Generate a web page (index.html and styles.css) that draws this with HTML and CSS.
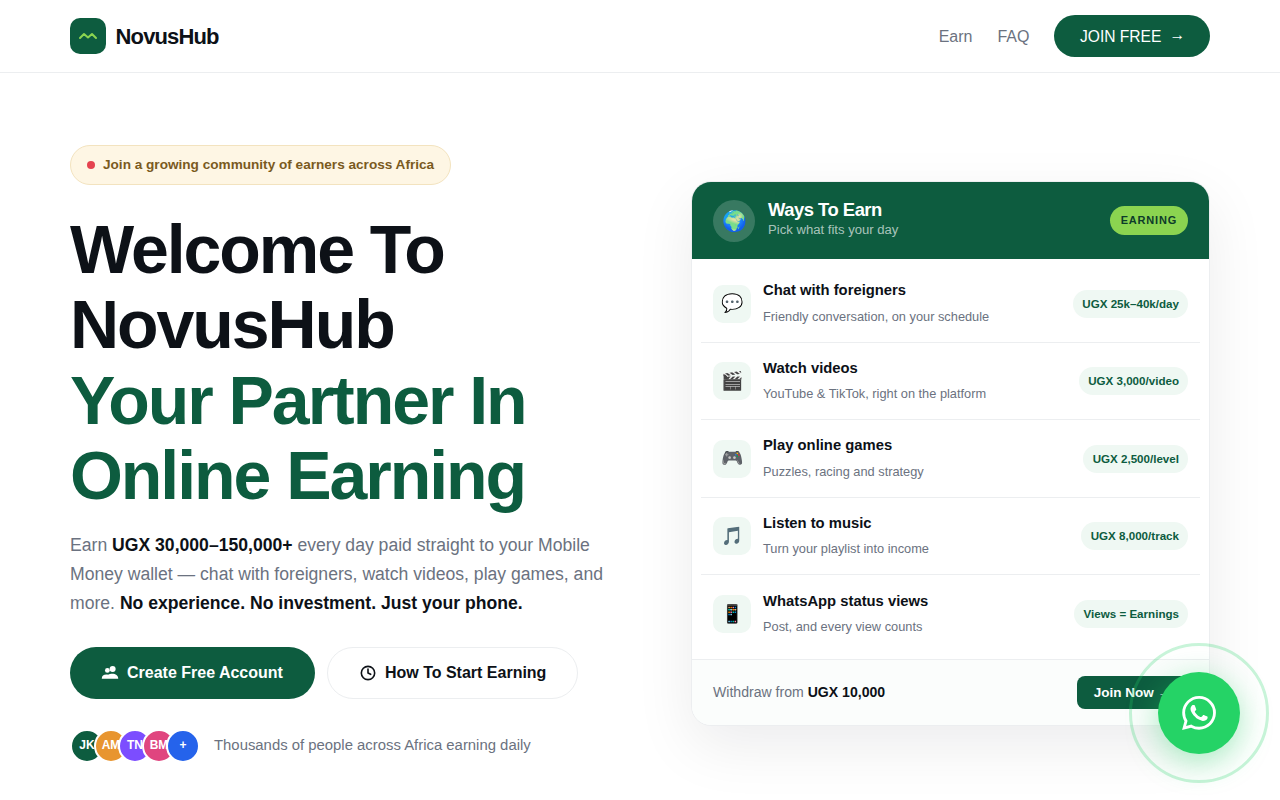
FILE: index.html
```html
<!DOCTYPE html>
<html lang="en">
<head>
    <meta charset="UTF-8">
    <title>NovusHub</title>
    <link rel="stylesheet" href="styles.css">
</head>
<body>
    <nav class="nav">
        <a class="brand" href="#">
            <span class="brand-mark">
                <svg width="20" height="20" viewBox="0 0 20 20" fill="none"><path d="M2 12 L6 8 L10 11.5 L14 8 L18 12" stroke="#8bd450" stroke-width="2" stroke-linecap="round" stroke-linejoin="round"/></svg>
            </span>
            <span class="brand-name">NovusHub</span>
        </a>
        <div class="nav-links">
            <a class="nav-link" href="#">Earn</a>
            <a class="nav-link" href="#">FAQ</a>
            <a class="nav-cta" href="#">JOIN FREE <span class="nav-arrow">→</span></a>
        </div>
    </nav>

    <main class="hero">
        <section class="hero-left">
            <div class="badge"><span class="badge-dot"></span>Join a growing community of earners across Africa</div>
            <h1>Welcome To NovusHub <span class="accent">Your Partner In Online Earning</span></h1>
            <p class="lead">Earn <strong>UGX 30,000–150,000+</strong> every day paid straight to your Mobile Money wallet — chat with foreigners, watch videos, play games, and more. <strong>No experience. No investment. Just your phone.</strong></p>
            <div class="actions">
                <a class="btn btn-primary" href="#">
                    <svg width="18" height="18" viewBox="0 0 24 24" fill="currentColor"><circle cx="8.5" cy="8.5" r="3.2"/><circle cx="15.5" cy="6.8" r="4"/><path d="M1 19.5c0-3.5 2.5-5.5 6-5.5 1 0 1.8.1 2.5.4 1.5-1 3.5-1.4 5.5-1.4 4.5 0 8 2.2 8 6.5z"/></svg>
                    Create Free Account
                </a>
                <a class="btn btn-ghost" href="#">
                    <svg width="16" height="16" viewBox="0 0 24 24" fill="none" stroke="currentColor" stroke-width="2.4" stroke-linecap="round" stroke-linejoin="round"><circle cx="12" cy="12" r="10"/><path d="M12 6v6l4 2"/></svg>
                    How To Start Earning
                </a>
            </div>
            <div class="people">
                <div class="avatars">
                    <span class="avatar av-green">JK</span>
                    <span class="avatar av-orange">AM</span>
                    <span class="avatar av-purple">TN</span>
                    <span class="avatar av-pink">BM</span>
                    <span class="avatar av-blue">+</span>
                </div>
                <span class="people-text">Thousands of people across Africa earning daily</span>
            </div>
        </section>

        <aside class="card">
            <header class="card-head">
                <span class="globe">🌍</span>
                <div class="card-head-text">
                    <div class="card-title">Ways To Earn</div>
                    <div class="card-sub">Pick what fits your day</div>
                </div>
                <span class="live">EARNING</span>
            </header>
            <ul class="ways">
                <li class="way">
                    <span class="way-icon">💬</span>
                    <div class="way-text"><div class="way-name">Chat with foreigners</div><div class="way-desc">Friendly conversation, on your schedule</div></div>
                    <span class="rate">UGX 25k–40k/day</span>
                </li>
                <li class="way">
                    <span class="way-icon">🎬</span>
                    <div class="way-text"><div class="way-name">Watch videos</div><div class="way-desc">YouTube &amp; TikTok, right on the platform</div></div>
                    <span class="rate">UGX 3,000/video</span>
                </li>
                <li class="way">
                    <span class="way-icon">🎮</span>
                    <div class="way-text"><div class="way-name">Play online games</div><div class="way-desc">Puzzles, racing and strategy</div></div>
                    <span class="rate">UGX 2,500/level</span>
                </li>
                <li class="way">
                    <span class="way-icon">🎵</span>
                    <div class="way-text"><div class="way-name">Listen to music</div><div class="way-desc">Turn your playlist into income</div></div>
                    <span class="rate">UGX 8,000/track</span>
                </li>
                <li class="way">
                    <span class="way-icon">📱</span>
                    <div class="way-text"><div class="way-name">WhatsApp status views</div><div class="way-desc">Post, and every view counts</div></div>
                    <span class="rate">Views = Earnings</span>
                </li>
            </ul>
            <footer class="card-foot">
                <span>Withdraw from <strong>UGX 10,000</strong></span>
                <a class="join" href="#">Join Now →</a>
            </footer>
        </aside>
    </main>

    <a class="wa" href="#">
        <span class="wa-ring"></span>
        <svg width="34" height="34" viewBox="0 0 24 24" fill="#fff"><path d="M17.472 14.382c-.297-.149-1.758-.867-2.03-.967-.273-.099-.471-.148-.67.15-.197.297-.767.966-.94 1.164-.173.199-.347.223-.644.075-.297-.15-1.255-.463-2.39-1.475-.883-.788-1.48-1.761-1.653-2.059-.173-.297-.018-.458.13-.606.134-.133.298-.347.446-.52.149-.174.198-.298.298-.497.099-.198.05-.371-.025-.52-.075-.149-.669-1.612-.916-2.207-.242-.579-.487-.5-.669-.51-.173-.008-.371-.01-.57-.01-.198 0-.52.074-.792.372-.272.297-1.04 1.016-1.04 2.479 0 1.462 1.065 2.875 1.213 3.074.149.198 2.096 3.2 5.077 4.487.709.306 1.262.489 1.694.625.712.227 1.36.195 1.871.118.571-.085 1.758-.719 2.006-1.413.248-.694.248-1.289.173-1.413-.074-.124-.272-.198-.57-.347m-5.421 7.403h-.004a9.87 9.87 0 01-5.031-1.378l-.361-.214-3.741.982.998-3.648-.235-.374a9.86 9.86 0 01-1.51-5.26c.001-5.45 4.436-9.884 9.888-9.884 2.64 0 5.122 1.03 6.988 2.898a9.825 9.825 0 012.893 6.994c-.003 5.45-4.437 9.884-9.885 9.884m8.413-18.297A11.815 11.815 0 0012.05 0C5.495 0 .16 5.335.157 11.892c0 2.096.547 4.142 1.588 5.945L.057 24l6.305-1.654a11.882 11.882 0 005.683 1.448h.005c6.554 0 11.89-5.335 11.893-11.893a11.821 11.821 0 00-3.48-8.413z"/></svg>
    </a>
</body>
</html>
```

FILE: styles.css
```css
* {
    box-sizing: border-box;
}

body, h1, p, ul, li {
    margin: 0;
    padding: 0;
    list-style: none;
}

html, body {
    height: 100%;
    overflow: hidden;
}

body {
    background: #fff;
    color: #0d1117;
    font-family: "Liberation Sans", Arial, sans-serif;
    line-height: 1.6;
}

a {
    color: inherit;
    text-decoration: none;
}

/* nav */
.nav {
    height: 73px;
    padding: 0 70px;
    display: flex;
    align-items: center;
    justify-content: space-between;
    border-bottom: 1px solid #eceef0;
}

.brand {
    display: flex;
    align-items: center;
    gap: 9.6px;
}

.brand-mark {
    width: 36px;
    height: 36px;
    border-radius: 10px;
    background: #0d5c3f;
    display: flex;
    align-items: center;
    justify-content: center;
}

.brand-name {
    padding-top: 2px;
    font-size: 22px;
    font-weight: 700;
    letter-spacing: -0.88px;
}

.nav-links {
    display: flex;
    align-items: center;
    gap: 25px;
    font-size: 16px;
    color: #6b7280;
}

.nav-link {
    padding-top: 2px;
}

.nav-cta {
    height: 42px;
    padding: 2px 25px 0 25.5px;
    border-radius: 21px;
    background: #0d5c3f;
    color: #fff;
    display: flex;
    align-items: center;
    gap: 8px;
    font-size: 15.6px;
}

.nav-arrow {
    padding-bottom: 4px;
}

/* hero */
.hero {
    padding: 72px 70px 0;
    display: grid;
    grid-template-columns: 560px 519px;
    justify-content: space-between;
    align-items: center;
}

.badge {
    display: inline-flex;
    align-items: center;
    gap: 8px;
    height: 40px;
    padding: 0 16px;
    border-radius: 20px;
    background: #fef6e4;
    border: 1px solid #f3e3bf;
    color: #7a5a1e;
    font-size: 13.6px;
    font-weight: 700;
}

.badge-dot {
    width: 8px;
    height: 8px;
    border-radius: 50%;
    background: #e5434f;
}

h1 {
    margin-top: 27px;
    font-size: 68px;
    line-height: 75.4px;
    font-weight: 700;
    letter-spacing: -2.04px;
}

.accent {
    color: #0d5c3f;
    display: block;
}

.lead {
    margin-top: 17px;
    font-size: 17.6px;
    line-height: 29px;
    color: #6b7280;
    width: 560px;
}

.lead strong {
    color: #0d1117;
}

.actions {
    margin-top: 29px;
    display: flex;
    gap: 12px;
}

.btn {
    height: 52px;
    padding: 0 32px;
    border-radius: 26px;
    display: flex;
    align-items: center;
    gap: 8px;
    font-size: 16px;
    font-weight: 700;
}

.btn-primary {
    padding-left: 31px;
    background: #0d5c3f;
    color: #fff;
}

.btn-ghost {
    padding-right: 31px;
    gap: 9px;
    background: #fff;
    border: 1px solid #eceef0;
}

.people {
    margin-top: 30px;
    display: flex;
    align-items: center;
    gap: 14px;
}

.avatars {
    display: flex;
}

.avatar {
    width: 34px;
    height: 34px;
    border-radius: 50%;
    border: 2px solid #fff;
    margin-left: -10px;
    color: #fff;
    font-size: 12px;
    font-weight: 700;
    display: flex;
    align-items: center;
    justify-content: center;
}

.avatar:first-child {
    margin-left: 0;
}

.av-green { background: #0d5c3f; }
.av-orange { background: #e8952f; }
.av-purple { background: #7c4dff; }
.av-pink { background: #e0457f; }
.av-blue { background: #2563eb; }

.people-text {
    font-size: 14.88px;
    color: #6b7280;
}

/* card */
.card {
    border: 1px solid #eceef0;
    border-radius: 20px;
    overflow: hidden;
    background: #fff;
    box-shadow: 0 20px 60px rgba(13, 17, 23, 0.08);
    align-self: start;
    margin-top: 36px;
}

.card-head {
    height: 78px;
    padding: 0 22px;
    margin: -1px -1px 0;
    background: #0d5c3f;
    display: flex;
    align-items: center;
    gap: 13px;
}

.globe {
    width: 42px;
    height: 42px;
    margin-top: 2px;
    border-radius: 50%;
    background: rgba(255, 255, 255, 0.18);
    display: flex;
    align-items: center;
    justify-content: center;
    font-size: 20px;
}

.card-head-text {
    flex: 1;
    padding-bottom: 3px;
}

.card-title {
    color: #fff;
    font-size: 18.4px;
    line-height: 22px;
    font-weight: 700;
    letter-spacing: -0.48px;
}

.card-sub {
    color: rgba(255, 255, 255, 0.65);
    font-size: 13.12px;
    line-height: 18px;
}

.live {
    height: 29px;
    padding: 2px 11px 0;
    border-radius: 15px;
    background: #8bd450;
    color: #0d3b2a;
    font-size: 11px;
    font-weight: 700;
    letter-spacing: 0.8px;
    display: flex;
    align-items: center;
}

.ways {
    padding: 6px 9px;
}

.way {
    height: 77.5px;
    padding: 1px 12px 0;
    display: flex;
    align-items: center;
    gap: 12px;
    border-bottom: 1px solid #eceef0;
}

.way:last-child {
    border-bottom: 0;
}

.way-icon {
    width: 38px;
    height: 38px;
    border-radius: 10px;
    background: #eff8f3;
    display: flex;
    align-items: center;
    justify-content: center;
    font-size: 18px;
    flex: none;
}

.way-text {
    flex: 1;
    padding-bottom: 2px;
}

.way-name {
    font-size: 14.8px;
    font-weight: 700;
    line-height: 22px;
}

.way-desc {
    margin-top: 5.5px;
    font-size: 12.8px;
    line-height: 20px;
    color: #6b7280;
}

.rate {
    height: 28px;
    padding: 1px 9px 0 9.5px;
    border-radius: 14px;
    background: #eff8f3;
    color: #0d5c3f;
    font-size: 11.6px;
    font-weight: 700;
    display: flex;
    align-items: center;
}

.card-foot {
    height: 66px;
    padding: 0 21px;
    border-top: 1px solid #eceef0;
    background: #fbfdfc;
    display: flex;
    align-items: center;
    justify-content: space-between;
    font-size: 14.08px;
    color: #6b7280;
}

.card-foot strong {
    color: #0d1117;
}

.join {
    height: 33px;
    padding: 2px 17px 0;
    border-radius: 8px;
    background: #0d5c3f;
    color: #fff;
    font-size: 13.5px;
    font-weight: 700;
    display: flex;
    align-items: center;
}

/* whatsapp button */
.wa {
    position: fixed;
    left: 1158px;
    top: 672px;
    width: 82px;
    height: 82px;
    border-radius: 50%;
    background: #25d366;
    display: flex;
    align-items: center;
    justify-content: center;
    box-shadow: 0 8px 32px rgba(37, 211, 102, 0.4);
}

.wa-ring {
    position: absolute;
    left: -29px;
    top: -29px;
    width: 140px;
    height: 140px;
    border-radius: 50%;
    border: 3px solid rgba(37, 211, 102, 0.25);
}
```
